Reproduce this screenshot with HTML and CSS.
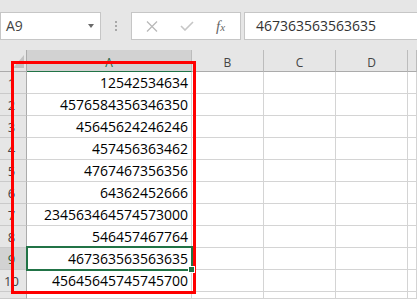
FILE: index.html
```html
<!DOCTYPE html>
<html lang="en">
<head>
    <meta charset="UTF-8">
    <meta name="viewport" content="width=device-width, initial-scale=1.0">
    <title>Sheet</title>
    <link rel="stylesheet" href="styles.css">
</head>
<body>
    <div class="formula-bar">
        <div class="name-box">
            <span>A9</span>
            <span class="arrow"></span>
        </div>
        <div class="grip"><i></i><i></i><i></i></div>
        <div class="buttons">
            <svg width="12" height="11" viewBox="0 0 12 11"><path d="M1 0.5 L11 10.5 M11 0.5 L1 10.5" stroke="#b9b9b9" stroke-width="1.3" fill="none"/></svg>
            <svg width="14" height="10" viewBox="0 0 14 10"><path d="M1 5 L5 9 L13 1" stroke="#c6c6c6" stroke-width="1.6" fill="none"/></svg>
            <span class="fx">f<small>x</small></span>
        </div>
        <div class="formula">467363563563635</div>
    </div>

    <div class="sheet">
        <div class="corner"></div>
        <div class="col-head selected">A</div>
        <div class="col-head">B</div>
        <div class="col-head">C</div>
        <div class="col-head">D</div>
        <div class="col-head"></div>

        <div class="row-head">1</div><div class="cell">12542534634</div><div class="cell"></div><div class="cell"></div><div class="cell"></div><div class="cell"></div>
        <div class="row-head">2</div><div class="cell">4576584356346350</div><div class="cell"></div><div class="cell"></div><div class="cell"></div><div class="cell"></div>
        <div class="row-head">3</div><div class="cell">45645624246246</div><div class="cell"></div><div class="cell"></div><div class="cell"></div><div class="cell"></div>
        <div class="row-head">4</div><div class="cell">457456363462</div><div class="cell"></div><div class="cell"></div><div class="cell"></div><div class="cell"></div>
        <div class="row-head">5</div><div class="cell">4767467356356</div><div class="cell"></div><div class="cell"></div><div class="cell"></div><div class="cell"></div>
        <div class="row-head">6</div><div class="cell">64362452666</div><div class="cell"></div><div class="cell"></div><div class="cell"></div><div class="cell"></div>
        <div class="row-head">7</div><div class="cell">234563464574573000</div><div class="cell"></div><div class="cell"></div><div class="cell"></div><div class="cell"></div>
        <div class="row-head">8</div><div class="cell">546457467764</div><div class="cell"></div><div class="cell"></div><div class="cell"></div><div class="cell"></div>
        <div class="row-head selected">9</div><div class="cell active">467363563563635</div><div class="cell"></div><div class="cell"></div><div class="cell"></div><div class="cell"></div>
        <div class="row-head">10</div><div class="cell">45645645745745700</div><div class="cell"></div><div class="cell"></div><div class="cell"></div><div class="cell"></div>
        <div class="row-head"></div><div class="cell"></div><div class="cell"></div><div class="cell"></div><div class="cell"></div><div class="cell"></div>
    </div>

    <div class="highlight"></div>
</body>
</html>
```

FILE: styles.css
```css
body {
    margin: 0;
    width: 417px;
    height: 299px;
    overflow: hidden;
    position: relative;
    background: #e6e6e6;
    font-family: "Open Sans", "Noto Sans", sans-serif;
}

/* barra de formulas */
.formula-bar {
    display: flex;
    align-items: flex-start;
    padding-top: 12px;
    height: 28px;
    margin-bottom: 10px;
}

.name-box,
.buttons,
.formula {
    box-sizing: border-box;
    height: 28px;
    background: #fff;
    border: 1px solid #c6c6c6;
    line-height: 26px;
    font-size: 14px;
}

.name-box {
    width: 101px;
    display: flex;
    justify-content: space-between;
    align-items: center;
    padding: 0 6px 0 5px;
    color: #444;
}

.arrow {
    width: 0;
    height: 0;
    border-left: 3.5px solid transparent;
    border-right: 3.5px solid transparent;
    border-top: 4px solid #6a6a6a;
}

.grip {
    width: 30px;
    height: 28px;
    display: flex;
    flex-direction: column;
    align-items: center;
    justify-content: center;
    gap: 2px;
}

.grip i {
    width: 2px;
    height: 2px;
    background: #a8a8a8;
}

.buttons {
    width: 110px;
    margin-right: 3px;
    display: flex;
    align-items: center;
    padding-left: 14px;
}

.buttons svg:first-child {
    margin-right: 22px;
}

.fx {
    margin-left: 22px;
    font-family: "Liberation Serif", serif;
    font-style: italic;
    font-size: 15px;
    color: #666;
}

.fx small {
    font-size: 11px;
}

.formula {
    flex: 1;
    margin-right: -2px;
    padding-left: 11px;
    color: #333;
}

/* hoja */
.sheet {
    display: grid;
    grid-template-columns: 27px 165px 72px 72px 72px 9px;
    grid-template-rows: repeat(11, 22px) 7px;
}

.sheet > div {
    box-sizing: border-box;
}

.corner {
    background: #e6e6e6;
    border-right: 1px solid #ababab;
    border-bottom: 1px solid #ababab;
    position: relative;
}

.corner::after {
    content: "";
    position: absolute;
    right: 2px;
    bottom: 3px;
    width: 0;
    height: 0;
    border-left: 11px solid transparent;
    border-bottom: 13px solid #c2c2c2;
}

.col-head {
    background: #e6e6e6;
    border-right: 1px solid #bcbcbc;
    border-bottom: 1px solid #ababab;
    text-align: center;
    font-size: 12px;
    line-height: 17px;
    padding-top: 4px;
    color: #444;
}

.col-head.selected {
    background: #d2d2d2;
    border-bottom: 1px solid #217346;
    color: #215c3b;
}

.row-head {
    background: #e6e6e6;
    border-right: 1px solid #ababab;
    border-bottom: 1px solid #cacaca;
    text-align: center;
    padding-right: 3px;
    font-size: 13px;
    line-height: 18px;
    padding-top: 2px;
    color: #444;
}

.row-head.selected {
    background: #d2d2d2;
    color: #215c3b;
}

.cell {
    background: #fff;
    border-right: 1px solid #d4d4d4;
    border-bottom: 1px solid #d4d4d4;
    text-align: right;
    padding-right: 3px;
    font-size: 14px;
    line-height: 22px;
    color: #000;
    white-space: nowrap;
}

.cell.active {
    position: relative;
    z-index: 1;
}

.cell.active::after {
    content: "";
    position: absolute;
    top: -2px;
    left: -1px;
    right: -2px;
    bottom: -2px;
    border: 2px solid #217346;
}

.cell.active::before {
    content: "";
    position: absolute;
    right: -4px;
    bottom: -4px;
    width: 5px;
    height: 5px;
    background: #217346;
    border: 1px solid #fff;
    z-index: 2;
}

/* marco rojo de la captura */
.highlight {
    position: absolute;
    left: 11px;
    top: 61px;
    width: 185px;
    height: 233px;
    box-sizing: border-box;
    border: 3px solid #ff0000;
}
```
